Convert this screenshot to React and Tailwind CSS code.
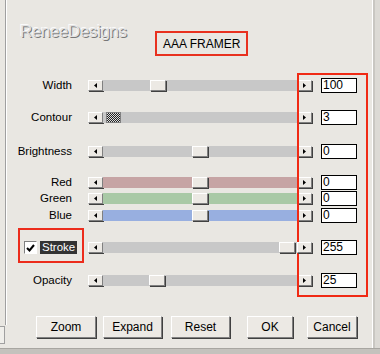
import React from "react";

const raised =
  "bg-[#ece9e4] border border-t-white border-l-white border-r-[#808080] border-b-[#808080] shadow-[1px_1px_0_#404040]";

function ArrowBtn({ dir }) {
  return (
    <div className={`w-[15px] h-[11px] flex items-center justify-center ${raised}`}>
      <svg width="3" height="5" viewBox="0 0 3 5">
        {dir === "left" ? <path d="M3 0 L0 2.5 L3 5 Z" fill="#000" /> : <path d="M0 0 L3 2.5 L0 5 Z" fill="#000" />}
      </svg>
    </div>
  );
}

function Slider({ thumb, track = "bg-[#c8c8c8]", textured }) {
  return (
    <div className="flex items-center w-[224px] h-[11px]">
      <ArrowBtn dir="left" />
      <div className={`relative flex-1 h-[11px] ${track}`}>
        {textured ? (
          <div
            className="absolute top-0 h-[11px] w-[15px] border border-[#808080] bg-[repeating-conic-gradient(#222_0_25%,#ddd_0_50%)] bg-[length:2px_2px]"
            style={{ left: thumb }}
          />
        ) : (
          <div className={`absolute top-0 h-[11px] w-[16px] ${raised}`} style={{ left: thumb }} />
        )}
      </div>
      <ArrowBtn dir="right" />
    </div>
  );
}

function Row({ label, value, thumb, track, textured, mt, checkbox }) {
  return (
    <div className="flex items-center h-[15px]" style={{ marginTop: mt }}>
      <div className="w-[72px] flex justify-end text-[11.5px] text-black leading-none">
        {checkbox ? (
          <div className="flex items-center gap-[3px] mr-[-5px]">
            <div className="w-[13px] h-[13px] bg-white border border-t-[#808080] border-l-[#808080] border-r-white border-b-white flex items-center justify-center">
              <svg width="9" height="8" viewBox="0 0 9 8">
                <path d="M1 4 L3.5 6.5 L8 1" stroke="#000" strokeWidth="2" fill="none" />
              </svg>
            </div>
            <span className="bg-[#333] text-white px-[2px] py-[1px] w-[37px]">{label}</span>
          </div>
        ) : (
          label
        )}
      </div>
      <div className="ml-[16px]">
        <Slider thumb={thumb} track={track} textured={textured} />
      </div>
      <div className="ml-[9px] w-[36px] h-[15px] bg-white border border-black text-[12px] leading-[13px] pl-[1px]">
        {value}
      </div>
    </div>
  );
}

export default function App() {
  return (
    <div
      className="relative w-[380px] h-[354px] overflow-hidden bg-[#e9e7e2]"
      style={{ fontFamily: '"Liberation Sans", Arial, sans-serif' }}
    >
      {/* window chrome */}
      <div className="absolute left-[5px] top-0 h-[325px] w-[2px] border-l border-l-[#a0a0a0] border-r border-r-white" />
      <div className="absolute left-0 top-[326px] w-[5px] h-[18px] border border-l-0 border-[#a0a0a0] bg-[#f0efeb]" />
      <div className="absolute right-[5px] top-0 h-[348px] w-[3px] border-l border-l-white bg-[#c9c7c2]" />
      <div className="absolute right-0 top-0 h-[354px] w-[5px] bg-[#dcdad5]" />
      <div className="absolute left-0 bottom-0 w-[380px] h-[6px] bg-[#c4c2bd] border-t border-t-[#a8a6a1]" />

      <div className="flex items-start pt-[22px] pl-[20px]">
        <div
          className="w-[108px] text-[17px] text-[#e2e2e2] tracking-[-0.4px] leading-[20px] [text-shadow:1px_1px_0_#777,-1px_-1px_0_#fafafa]"
        >
          ReneeDesigns
        </div>
        <div className="ml-[27px] mt-[9px] w-[93px] h-[25px] border-2 border-[#e8311f] flex items-center pl-[6px] text-[12px] text-black">
          AAA FRAMER
        </div>
      </div>

      <div className="relative">
        <div className="absolute left-[297px] top-[17px] w-[71px] h-[224px] border-2 border-[#f02a14]" />
        <div className="flex flex-col">
          <Row label="Width" value="100" thumb={47} mt={22} />
          <Row label="Contour" value="3" thumb={3} textured mt={17} />
          <Row label="Brightness" value="0" thumb={89} mt={19} />
          <Row label="Red" value="0" thumb={89} track="bg-[#c6a4a4]" mt={16} />
          <Row label="Green" value="0" thumb={89} track="bg-[#a9c9a6]" mt={1} />
          <Row label="Blue" value="0" thumb={89} track="bg-[#98afe0]" mt={2} />
          <div className="relative">
            <div className="absolute left-[18px] top-[5px] w-[66px] h-[35px] border-2 border-[#ec2c1c]" />
            <Row label="Stroke" value="255" thumb={176} checkbox mt={17} />
          </div>
          <Row label="Opacity" value="25" thumb={46} mt={18} />
        </div>
      </div>

      <div className="flex items-center mt-[28px] pl-[36px] text-[12px] text-black">
        {[
          ["Zoom", 60, 0],
          ["Expand", 59, 7],
          ["Reset", 59, 9],
          ["OK", 46, 17],
          ["Cancel", 50, 14],
        ].map(([t, w, ml]) => (
          <button
            key={t}
            className={`h-[22px] flex items-center justify-center ${raised}`}
            style={{ width: w, marginLeft: ml }}
          >
            {t}
          </button>
        ))}
      </div>
    </div>
  );
}
